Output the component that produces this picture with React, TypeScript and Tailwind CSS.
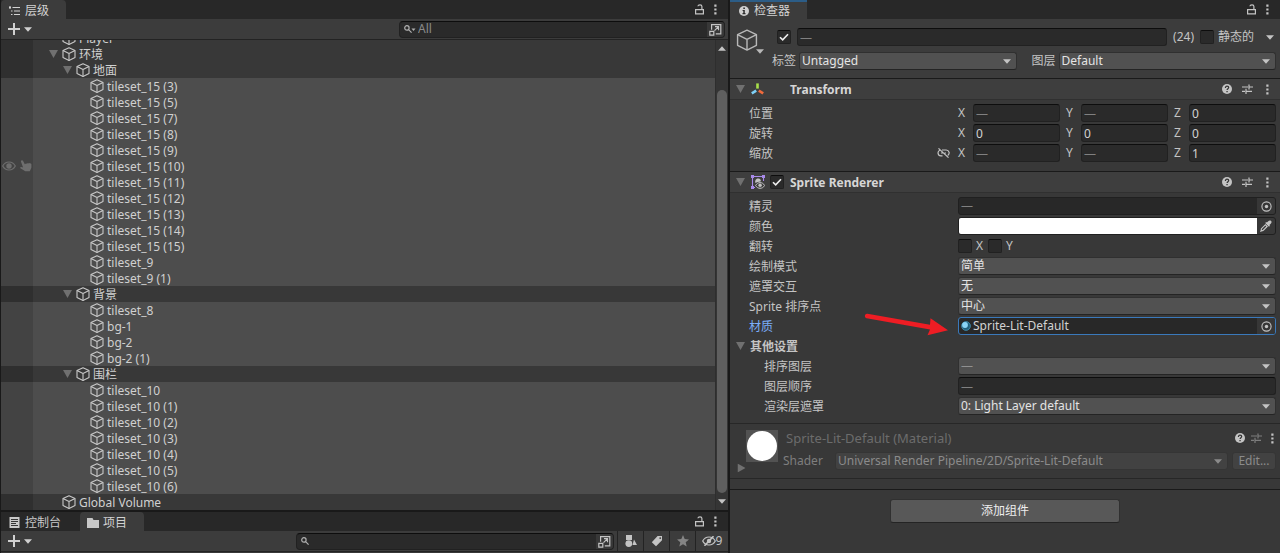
import type { ReactNode } from "react";
import clsx from "clsx";

interface TreeItem {
  name: string;
  depth: number;
  open?: boolean;
  selected?: boolean;
  hovered?: boolean;
}

const leaf = (name: string): TreeItem => ({
  name,
  depth: 2,
  selected: true,
  hovered: name === "tileset_15 (10)",
});

const items: TreeItem[] = [
  { name: "Player", depth: 0 },
  { name: "环境", depth: 0, open: true },
  { name: "地面", depth: 1, open: true },
  ...[3, 5, 7, 8, 9, 10, 11, 12, 13, 14, 15].map((n) => leaf(`tileset_15 (${n})`)),
  leaf("tileset_9"),
  leaf("tileset_9 (1)"),
  { name: "背景", depth: 1, open: true },
  ...["tileset_8", "bg-1", "bg-2", "bg-2 (1)"].map(leaf),
  { name: "围栏", depth: 1, open: true },
  leaf("tileset_10"),
  ...[1, 2, 3, 4, 5, 6].map((n) => leaf(`tileset_10 (${n})`)),
  { name: "Global Volume", depth: 0 },
];

const indent = ["pl-4", "pl-[30px]", "pl-[44px]"];

/* ---------- icons ---------- */

function CubeIcon({ className, stroke = 1.1 }: { className?: string; stroke?: number }) {
  return (
    <svg viewBox="0 0 14 14" className={className} fill="none" stroke="currentColor" strokeWidth={stroke} strokeLinejoin="round">
      <path d="M7 .7 13 3.6v6.8L7 13.4 1 10.4V3.6Z" />
      <path d="M1 3.6 7 6.6l6-3M7 6.6v6.8" />
    </svg>
  );
}

function Caret({ className }: { className?: string }) {
  return (
    <svg viewBox="0 0 8 5" className={clsx("h-[5px] w-2 shrink-0", className)} fill="currentColor">
      <path d="M0 .3h8L4 4.8Z" />
    </svg>
  );
}

function Foldout({ className }: { className?: string }) {
  return (
    <svg viewBox="0 0 9 8" className={clsx("h-2 w-[9px] shrink-0 text-[#707070]", className)} fill="currentColor">
      <path d="M0 0h9L4.500 8Z" />
    </svg>
  );
}

function LockIcon() {
  return (
    <svg viewBox="0 0 9 11" className="h-[11px] w-[9px]" fill="none" stroke="currentColor" strokeWidth="1.2">
      <path d="M.6 5.600h7.800v4.200H.6Z" />
      <path d="M6.900 5.500V2.600C6.900 1.400 6.200.8 5 .8S3 1.300 2.900 2.200" />
    </svg>
  );
}

function DotsIcon() {
  return (
    <svg viewBox="0 0 3 11" className="h-[11px] w-[3px]" fill="currentColor">
      <path d="M.3.5h2.200v2.200H.3ZM.3 4.400h2.200v2.200H.3ZM.3 8.300h2.200v2.200H.3Z" />
    </svg>
  );
}

function HelpIcon() {
  return (
    <svg viewBox="0 0 10 10" className="h-2.5 w-2.5" fill="none">
      <circle cx="5" cy="5" r="5" fill="#c4c4c4" />
      <path d="M3.400 3.900C3.400 2.800 4.100 2.200 5 2.200s1.700.5 1.700 1.400C6.700 4.700 5.100 4.700 5.100 6" stroke="#333" strokeWidth="1.2" />
      <path d="M4.400 7h1.300v1.200H4.400Z" fill="#333" />
    </svg>
  );
}

function PresetIcon() {
  return (
    <svg viewBox="0 0 11 10" className="h-2.5 w-[11px]" fill="none" stroke="currentColor" strokeWidth="1.200">
      <path d="M0 3h6M7 .4v5.200M7 3h4M0 7.400h3M4 4.800V10M4 7.400h6" />
    </svg>
  );
}

function SearchIcon({ caret }: { caret?: boolean }) {
  return (
    <svg viewBox="0 0 12 8" className="h-2 w-3 shrink-0" fill="none" stroke="currentColor" strokeWidth="1.200">
      <circle cx="2.900" cy="2.900" r="2.200" />
      <path d="m4.600 4.600 3 3" />
      {caret && <path d="M7.500 3.500h4L9.500 6Z" fill="currentColor" stroke="none" />}
    </svg>
  );
}

function PopoutIcon() {
  return (
    <svg viewBox="0 0 13 13" className="h-[13px] w-[13px]" fill="none" stroke="currentColor" strokeWidth="1.200">
      <path d="M2.600 6.800V1.600h9.200v9.200H6.800" />
      <path d="M.8 8.400h4v3.800h-4Z" />
      <path d="m5.500 7.600 3.800-3.800M6 3.700h3.500v3.500" />
    </svg>
  );
}

function PlusIcon() {
  return (
    <svg viewBox="0 0 12 12" className="h-3 w-3" fill="none" stroke="currentColor" strokeWidth="2">
      <path d="M6 0v12M0 6h12" />
    </svg>
  );
}

function HierarchyIcon() {
  return (
    <svg viewBox="0 0 11 10" className="h-2.5 w-[11px]" fill="none" stroke="currentColor" strokeWidth="1.200">
      <path d="M0 1.500h2M3.500 1.500H11M2 5h1.500M5 5h6M2 8.500h1.500M5 8.500h6M1 0v3" />
    </svg>
  );
}

function InfoIcon() {
  return (
    <svg viewBox="0 0 10 10" className="h-2.5 w-2.5">
      <circle cx="5" cy="5" r="5" fill="#d0d0d0" />
      <path d="M4.300 1.500h1.600V3H4.300ZM3.600 3.900h2.200v3.200h.7v1.100h-3V7.100h.8V5h-.7Z" fill="#2c2c2c" />
    </svg>
  );
}

function EyeIcon() {
  return (
    <svg viewBox="0 0 14 10" className="h-2.5 w-3.5" fill="none" stroke="currentColor" strokeWidth="1.200">
      <path d="M.7 5C2.200 2.200 4.500 1 7 1s4.800 1.200 6.300 4C11.800 7.800 9.500 9 7 9S2.200 7.800.7 5Z" />
      <circle cx="7" cy="5" r="2.700" fill="currentColor" stroke="none" />
    </svg>
  );
}

function HandIcon() {
  return (
    <svg viewBox="0 0 12 12" className="h-3 w-3" fill="currentColor">
      <path d="M1.400.4C2.100 0 2.800.3 3.100.9l1.700 3.300 1.300-.8.9.3.9-.6 1 .4.9-.4 1.600 1v3.600l-1.600 3.600H5.300L.4 8.200c-.5-.6.1-1.400.9-1.200l1.800.4L1 1.700C.8 1.200 1 .7 1.400.4Z" />
    </svg>
  );
}

function TargetIcon() {
  return (
    <svg viewBox="0 0 11 11" className="h-[11px] w-[11px]" fill="none">
      <circle cx="5.500" cy="5.500" r="4.600" stroke="currentColor" strokeWidth="1.100" />
      <circle cx="5.500" cy="5.500" r="1.700" fill="currentColor" />
    </svg>
  );
}

function DropperIcon() {
  return (
    <svg viewBox="0 0 12 12" className="h-3 w-3" fill="currentColor">
      <path d="M8 1.500C9 .3 10.300.1 11.100.9s.6 2.100-.6 3.100L9.400 5.100l.6.700-1 1L5.200 3l1-1 .7.600Z" />
      <path d="M5.400 4 8 6.600l-4.600 4.500-1.900.3-.9.600-.6-.6.6-.9.300-1.900ZM5.400 5.600l-3.500 3.500-.1.900.9-.1 3.500-3.500Z" fillRule="evenodd" />
    </svg>
  );
}

function AxesIcon() {
  return (
    <svg viewBox="0 0 13 12" className="h-3 w-[13px]" fill="none" strokeWidth="2.600">
      <path d="M6.500.4v5.200" stroke="#a8e04a" />
      <path d="M5.200 7.600.8 10.300" stroke="#7fd0f7" />
      <path d="m7.800 7.600 4.400 2.700" stroke="#f06a3c" />
    </svg>
  );
}

function SpriteIcon() {
  return (
    <svg viewBox="0 0 14 14" className="h-3.5 w-3.5" fill="none">
      <path d="M1.500 12V1.500h11V6M1.500 12.500H4" stroke="#a98bea" strokeWidth="1.100" />
      <path d="M0 0h3v3H0ZM11 0h3v3h-3ZM0 11h3v3H0Z" fill="#a98bea" />
      <path d="M4.500 8C3.400 5.200 5.500 3.400 7.300 3.500S10.400 5 9.600 6.400C7.500 6.500 5.800 7.200 4.500 8Z" fill="#c4c4c4" />
      <path d="M4.600 10.500c1.200-2 2.700-2.900 4.500-2.900s3.400.9 4.500 2.900c-1.200 2-2.700 2.800-4.500 2.800s-3.300-.8-4.500-2.800Z" stroke="#c4c4c4" />
      <circle cx="9.100" cy="10.200" r="1.700" fill="#c4c4c4" />
    </svg>
  );
}

function UnlinkIcon() {
  return (
    <svg viewBox="0 0 13 10" className="h-2.5 w-[13px]" fill="none" stroke="currentColor" strokeWidth="1.200">
      <path d="M5.500 7.800H3.800a2.900 2.900 0 0 1-.9-5.600M5 2h4.200a2.900 2.900 0 0 1 1.500 5.400M4 5h2M7.500 5H9M1.500.4l10 9.200" />
    </svg>
  );
}

function MaterialBall() {
  return (
    <svg viewBox="0 0 10 10" className="h-2.5 w-2.5 shrink-0">
      <circle cx="5" cy="5" r="4.700" fill="#22607c" />
      <circle cx="5" cy="5" r="4.300" fill="none" stroke="#4690b0" strokeWidth=".8" />
      <circle cx="4" cy="4" r="2.900" fill="#8ad4f6" />
    </svg>
  );
}

/* ---------- shared parts ---------- */

function TabMenu() {
  return (
    <div className="ml-auto flex items-center gap-2.5 pr-[11px] text-[#c4c4c4]">
      <button aria-label="Lock"><LockIcon /></button>
      <button aria-label="Menu"><DotsIcon /></button>
    </div>
  );
}

function AddButton() {
  return (
    <button aria-label="Add" className="flex items-center gap-1 pl-[7px] text-[#d0d0d0]">
      <PlusIcon />
      <Caret />
    </button>
  );
}

function SearchBox({ placeholder, caret, className }: { placeholder?: string; caret?: boolean; className: string }) {
  return (
    <div className={clsx("flex h-[17px] overflow-hidden rounded border border-[#212121] border-t-[#0d0d0d] bg-[#2a2a2a]", className)}>
      <label className="flex min-w-0 flex-1 items-center pl-1 text-[#b0b0b0]">
        <SearchIcon caret={caret} />
        <input
          aria-label="Search"
          placeholder={placeholder}
          className="ml-0.5 min-w-0 flex-1 bg-transparent leading-4 outline-none placeholder:text-[#8a8a8a]"
        />
      </label>
      <button aria-label="Open search" className="flex w-[17px] items-center justify-center bg-[#383838] text-[#c4c4c4]">
        <PopoutIcon />
      </button>
    </div>
  );
}

function Check({ label, checked }: { label: string; checked?: boolean }) {
  return (
    <span className="relative flex h-3.5 w-3.5 shrink-0">
      <input
        type="checkbox"
        aria-label={label}
        defaultChecked={checked}
        className="peer h-3.5 w-3.5 appearance-none rounded-xs border border-[#212121] border-t-[#0d0d0d] bg-[#2a2a2a]"
      />
      <svg viewBox="0 0 14 14" className="pointer-events-none absolute inset-0 hidden peer-checked:block" fill="none" stroke="#eee" strokeWidth="1.600">
        <path d="m3 7.200 2.700 2.700L11 4.200" />
      </svg>
    </span>
  );
}

function Field({ label, value }: { label: string; value: string }) {
  return (
    <input
      aria-label={label}
      defaultValue={value}
      className={clsx(
        "h-[18px] min-w-0 flex-1 rounded-[3px] border border-[#212121] border-t-[#0d0d0d] bg-[#2a2a2a] px-0.5 outline-none",
        value === "—" ? "text-[#808080]" : "text-[#d2d2d2]"
      )}
    />
  );
}

function Dropdown({ label, value, dim }: { label: string; value: string; dim?: boolean }) {
  return (
    <span className={clsx("relative flex min-w-0 flex-1 items-center", dim ? "text-[#8b8b8b]" : "text-[#e4e4e4]")}>
      <select
        aria-label={label}
        className={clsx(
          "h-[18px] w-full appearance-none rounded-[3px] border px-0.5 leading-4 outline-none",
          dim ? "border-[#353535] bg-[#424242]" : "border-[#303030] border-b-[#242424] bg-[#515151]",
          value === "—" && "text-[#909090]"
        )}
      >
        <option>{value}</option>
      </select>
      <Caret className={clsx("pointer-events-none absolute right-1.5", dim ? "text-[#8b8b8b]" : "text-[#c4c4c4]")} />
    </span>
  );
}

function ObjectField({ label, children, active }: { label: string; children: ReactNode; active?: boolean }) {
  return (
    <div className={clsx("flex h-[18px] flex-1 overflow-hidden rounded-[3px] border bg-[#282828]", active ? "border-[#3a79bb]" : "border-[#202020]")}>
      <div className="flex flex-1 items-center gap-0.5 px-0.5">{children}</div>
      <button aria-label={label} className="flex w-[18px] items-center justify-center bg-[#373737] text-[#c4c4c4]">
        <TargetIcon />
      </button>
    </div>
  );
}

interface RowProps {
  label: string;
  nested?: boolean;
  active?: boolean;
  extra?: ReactNode;
  children: ReactNode;
}

function Row({ label, nested, active, extra, children }: RowProps) {
  return (
    <div className="flex h-5 items-center pr-1">
      <div className={clsx("relative flex w-57 shrink-0 items-center justify-between pr-2", nested ? "pl-[34px]" : "pl-[19px]", active && "text-[#7baefa]")}>
        <span className="pt-0.5">{label}</span>
        {extra}
      </div>
      {children}
    </div>
  );
}

function Vector({ label, values, linked }: { label: string; values: string[]; linked?: boolean }) {
  return (
    <Row label={label} extra={linked && <button aria-label="Constrain proportions"><UnlinkIcon /></button>}>
      <div className="grid flex-1 grid-cols-3 gap-1.5">
        {["X", "Y", "Z"].map((axis, i) => (
          <label key={axis} className="flex items-center">
            <span className="w-[15px] shrink-0">{axis}</span>
            <Field label={`${label} ${axis}`} value={values[i]} />
          </label>
        ))}
      </div>
    </Row>
  );
}

function SectionHeader({ title, icon, check }: { title: string; icon: ReactNode; check?: boolean }) {
  const button = "flex w-5 justify-center";
  return (
    <div className="flex h-[22px] items-center border-t border-b border-t-[#1a1a1a] border-b-[#303030] bg-[#3e3e3e] pr-[3px] pl-1.5">
      <Foldout />
      <span className="ml-1.5 flex w-[19px] items-center">{icon}</span>
      <span className="w-5">{check && <Check label={title} checked />}</span>
      <h2 className="flex-1 pt-0.5 font-bold text-[#d6d6d6]">{title}</h2>
      <button aria-label="Help" className={button}><HelpIcon /></button>
      <button aria-label="Presets" className={button}><PresetIcon /></button>
      <button aria-label="Menu" className={button}><DotsIcon /></button>
    </div>
  );
}

/* ---------- panels ---------- */

function Hierarchy() {
  return (
    <section className="flex flex-col">
      <div className="flex h-[19px] bg-[#282828]">
        <div className="flex w-[65px] items-center gap-[5px] rounded-t bg-[#3c3c3c] pt-0.5 pl-2 text-[#d2d2d2]">
          <HierarchyIcon />
          层级
        </div>
        <TabMenu />
      </div>
      <div className="flex h-[21px] items-center justify-between border-b border-[#232323] bg-[#3c3c3c] pr-[3px]">
        <AddButton />
        <SearchBox placeholder="All" caret className="w-[326px]" />
      </div>
      <div className="flex h-[470px] overflow-hidden">
        <ul className="-mt-2.5 flex-1">
          {items.map((item) => (
            <li key={item.name} className={clsx("flex h-4 items-center", item.selected ? "bg-[#4d4d4d]" : "bg-[#383838]")}>
              <span
                className={clsx(
                  "flex h-4 w-8 shrink-0 items-center justify-center gap-1 text-[#6e6e6e]",
                  item.selected ? "bg-[#434343]" : "bg-[#2f2f2f]"
                )}
              >
                {item.hovered && <><EyeIcon /><HandIcon /></>}
              </span>
              <span className={clsx("flex items-center", indent[item.depth])}>
                <span className="w-[13px]">{item.open && <Foldout />}</span>
                <CubeIcon className="mr-[3px] h-3.5 w-3.5 text-[#c8c8c8]" />
                <span className="pt-0.5 leading-4 text-[#d0d0d0]">{item.name}</span>
              </span>
            </li>
          ))}
        </ul>
        <div className="flex w-[13px] flex-col items-center border-l border-[#2e2e2e] bg-[#353535] py-1.5 text-[#c4c4c4]">
          <Caret className="rotate-180" />
          <div className="mt-[39px] mb-1.5 w-2.5 flex-1 rounded-full bg-[#5f5f5f]" />
          <Caret />
        </div>
      </div>
    </section>
  );
}

function Project() {
  const tool = "flex h-full items-center justify-center border-l border-[#232323]";
  return (
    <section className="border-t-2 border-[#191919]">
      <div className="flex h-[19px] bg-[#282828]">
        <button className="flex w-[79px] items-center gap-[5px] pt-0.5 pl-2 text-[#c8c8c8]">
          <svg viewBox="0 0 11 11" className="h-[11px] w-[11px]">
            <path d="M.5 0h10v11H.5Z" fill="#c8c8c8" />
            <path d="M2 2.500h7M2 4.500h7M2 6.500h5M2 8.500h7" stroke="#333" />
          </svg>
          控制台
        </button>
        <button className="flex w-16 items-center gap-1 rounded-t bg-[#3c3c3c] pt-0.5 pl-[7px] text-[#d2d2d2]">
          <svg viewBox="0 0 12 10" className="h-2.5 w-3" fill="#c8c8c8">
            <path d="M0 0h5.500l1 2H12v8H0Z" />
          </svg>
          项目
        </button>
        <TabMenu />
      </div>
      <div className="flex h-[21px] items-center border-b border-[#232323] bg-[#3c3c3c] text-[#c4c4c4]">
        <AddButton />
        <SearchBox className="mr-[3px] ml-auto w-[318px]" />
        <button aria-label="Search by type" className={clsx(tool, "w-[26px]")}>
          <svg viewBox="0 0 12 12" className="h-3 w-3" fill="currentColor">
            <path d="M1 0h6v5H1Z" />
            <circle cx="3.800" cy="8.600" r="3.400" />
            <path d="m9 4.500 3 5.500H7.500Z" />
          </svg>
        </button>
        <button aria-label="Search by label" className={clsx(tool, "w-[26px]")}>
          <svg viewBox="0 0 12 12" className="h-3 w-3" fill="currentColor" fillRule="evenodd">
            <path d="M6.600 1h4.400v4.200L5 11.200.8 7.200ZM9.200 2.200a.9.9 0 1 0 0 1.800.9.9 0 0 0 0-1.800Z" />
          </svg>
        </button>
        <button aria-label="Favorites" className={clsx(tool, "w-[26px] text-[#858585]")}>
          <svg viewBox="0 0 12 12" className="h-3 w-3" fill="currentColor">
            <path d="m6 0 1.700 4.100 4.300.3-3.300 2.900 1 4.300L6 9.300l-3.700 2.300 1-4.300L0 4.400l4.300-.3Z" />
          </svg>
        </button>
        <button aria-label="Hidden packages" className={clsx(tool, "w-[33px]")}>
          <svg viewBox="0 0 14 10" className="h-2.5 w-3.5" fill="none" stroke="currentColor" strokeWidth="1.200">
            <path d="M.7 5C2.200 2.200 4.500 1 7 1s4.800 1.200 6.300 4C11.800 7.800 9.500 9 7 9S2.200 7.800.7 5Z" />
            <path d="M2.500 9.800 11.500.2" strokeWidth="1.600" />
            <circle cx="7" cy="5" r="2.200" fill="currentColor" stroke="none" />
          </svg>
          9
        </button>
      </div>
    </section>
  );
}

function ObjectHeader() {
  return (
    <div className="flex gap-2 bg-[#3c3c3c] pt-2 pr-1 pb-[7px] pl-1.5">
      <button aria-label="Icon" className="flex w-7 items-start text-[#b8b8b8]">
        <CubeIcon className="mt-0.5 h-[22px] w-[22px] shrink-0" stroke={0.9} />
        <Caret className="mt-[22px] -ml-0.5" />
      </button>
      <div className="flex flex-1 flex-col gap-1">
        <div className="flex h-5 items-center gap-1.5 pl-[5px]">
          <Check label="Active" checked />
          <Field label="Name" value="—" />
          <span>(24)</span>
          <Check label="静态的" />
          <span className="-ml-0.5 w-[42px]">静态的</span>
          <button aria-label="Static options" className="pr-0.5"><Caret /></button>
        </div>
        <div className="flex h-5 items-center gap-[3px]">
          <span>标签</span>
          <Dropdown label="标签" value="Untagged" />
          <span className="ml-3">图层</span>
          <Dropdown label="图层" value="Default" />
        </div>
      </div>
    </div>
  );
}

function Inspector() {
  return (
    <section className="flex min-w-0 flex-1 flex-col border-l-2 border-[#191919] bg-[#383838] text-[#c4c4c4]">
      <div className="flex h-[19px] bg-[#282828]">
        <div className="flex w-[77px] items-center gap-[5px] border-t-2 border-[#2c5d87] bg-[#3c3c3c] pl-[9px] text-[#d2d2d2]">
          <InfoIcon />
          检查器
        </div>
        <TabMenu />
      </div>
      <ObjectHeader />

      <SectionHeader title="Transform" icon={<AxesIcon />} />
      <div className="pt-[3px] pb-2">
        <Vector label="位置" values={["—", "—", "0"]} />
        <Vector label="旋转" values={["0", "0", "0"]} />
        <Vector label="缩放" values={["—", "—", "1"]} linked />
      </div>

      <SectionHeader title="Sprite Renderer" icon={<SpriteIcon />} check />
      <div className="pt-[3px] pb-[7px]">
        <Row label="精灵">
          <ObjectField label="Pick sprite"><span className="text-[#808080]">—</span></ObjectField>
        </Row>
        <Row label="颜色">
          <div className="flex h-[18px] flex-1 overflow-hidden rounded-[3px] border border-[#202020]">
            <input
              type="color"
              aria-label="颜色"
              defaultValue="#ffffff"
              className="h-4 min-w-0 flex-1 appearance-none p-0 [&::-webkit-color-swatch]:border-0 [&::-webkit-color-swatch-wrapper]:p-0"
            />
            <button aria-label="Pick color" className="flex w-[18px] items-center justify-center"><DropperIcon /></button>
          </div>
        </Row>
        <Row label="翻转">
          <label className="flex w-[30px] items-center gap-1"><Check label="翻转 X" />X</label>
          <label className="flex items-center gap-1"><Check label="翻转 Y" />Y</label>
        </Row>
        <Row label="绘制模式"><Dropdown label="绘制模式" value="简单" /></Row>
        <Row label="遮罩交互"><Dropdown label="遮罩交互" value="无" /></Row>
        <Row label="Sprite 排序点"><Dropdown label="Sprite 排序点" value="中心" /></Row>
        <Row
          label="材质"
          active
          extra={
            <svg viewBox="0 0 84 28" className="absolute -top-1 right-2.5 h-7 w-[84px]" fill="#ee1d24">
              <path d="M3.500.8 66 11.800 66.500 5.200 84 17.200 63.500 22.200 66 16.600 2.600 5.300C-.2 4.300.6.3 3.500.8Z" />
            </svg>
          }
        >
          <ObjectField label="Pick material" active>
            <MaterialBall />
            <span className="text-[#d2d2d2]">Sprite-Lit-Default</span>
          </ObjectField>
        </Row>
        <div className="flex h-5 items-center gap-[5px] pl-1.5">
          <Foldout />
          <h3 className="pt-0.5 font-bold">其他设置</h3>
        </div>
        <Row label="排序图层" nested><Dropdown label="排序图层" value="—" /></Row>
        <Row label="图层顺序" nested><Field label="图层顺序" value="—" /></Row>
        <Row label="渲染层遮罩" nested><Dropdown label="渲染层遮罩" value="0: Light Layer default" /></Row>
      </div>

      <div className="flex h-14 border-t border-b border-[#272727] pt-1.5 pl-[7px] text-[#7e7e7e]">
        <button aria-label="Expand material" className="w-[9px] self-end pb-1.5">
          <Foldout className="-rotate-90" />
        </button>
        <div className="flex h-8 w-8 shrink-0 items-center justify-center bg-[#525252]">
          <div className="h-[30px] w-[30px] rounded-full bg-white" />
        </div>
        <div className="flex flex-1 flex-col gap-1.5 pl-[5px]">
          <div className="flex h-4 items-center pl-[3px]">
            <span className="flex-1 text-[13px] text-[#6c6c6c]">Sprite-Lit-Default (Material)</span>
            <button aria-label="Help" className="flex w-4 justify-center"><HelpIcon /></button>
            <button aria-label="Presets" className="flex w-4 justify-center"><PresetIcon /></button>
            <button aria-label="Menu" className="flex w-4 justify-center text-[#c4c4c4]"><DotsIcon /></button>
          </div>
          <div className="flex h-[18px] items-center gap-1 pr-1">
            <span className="w-12">Shader</span>
            <Dropdown label="Shader" value="Universal Render Pipeline/2D/Sprite-Lit-Default" dim />
            <button className="h-[18px] w-11 rounded-[3px] border border-[#353535] bg-[#424242] leading-4 text-[#8b8b8b]">Edit...</button>
          </div>
        </div>
      </div>

      <div className="mt-2.5 flex justify-center border-t border-[#1a1a1a] pt-[9px]">
        <button className="h-6 w-[230px] rounded-[3px] border border-[#303030] border-b-[#242424] bg-[#585858] text-[#eee]">添加组件</button>
      </div>
    </section>
  );
}

export default function App() {
  return (
    <main className="flex min-h-screen bg-[#383838] font-['Noto_Sans','Noto_Sans_CJK_SC',sans-serif] text-[12px] leading-4 text-[#c4c4c4]">
      <div className="flex w-[56.875%] shrink-0 flex-col border-l border-[#191919]">
        <Hierarchy />
        <Project />
      </div>
      <Inspector />
    </main>
  );
}
